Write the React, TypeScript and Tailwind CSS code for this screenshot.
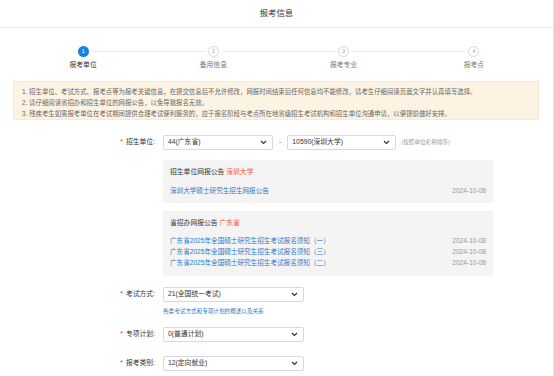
import React from 'react';

const steps = ['报考单位', '备用信息', '报考专业', '报考点'];

const notices = [
  '1. 招生单位、考试方式、报考点等为报考关键信息，在提交信息后不允许修改，网报时间结束后任何信息均不能修改，请考生仔细阅读页面文字并认真填写选择。',
  '2. 请仔细阅读省招办和招生单位的网报公告，以免导致报名无效。',
  '3. 残疾考生如需报考单位在考试期间提供合理考试便利服务的，应于报名阶段与考点所在地省级招生考试机构和招生单位沟通申请，以便提前做好安排。',
];

const provinceLinks = [
  '广东省2025年全国硕士研究生招生考试报名须知（一）',
  '广东省2025年全国硕士研究生招生考试报名须知（三）',
  '广东省2025年全国硕士研究生招生考试报名须知（二）',
];

function Chevron() {
  return (
    <svg width="7" height="5" viewBox="0 0 7 5" className="shrink-0">
      <path d="M1 1 L3.5 3.5 L6 1" fill="none" stroke="#333" strokeWidth="1.2" />
    </svg>
  );
}

function Select({ value, width }: { value: string; width: string }) {
  return (
    <div className={`${width} h-[15px] border border-[#d9d9d9] rounded-[2px] bg-white flex items-center justify-between pl-[4px] pr-[5px] text-[6.8px] text-[#333]`}>
      <span>{value}</span>
      <Chevron />
    </div>
  );
}

function Label({ text }: { text: string }) {
  return (
    <div className="w-[155px] flex justify-end items-center text-[6.8px] text-[#333]">
      <span className="text-[#f5222d] mr-[3px]">*</span>
      <span>{text}:</span>
    </div>
  );
}

export default function App() {
  return (
    <div
      className="w-[554px] h-[376px] overflow-hidden bg-white border-r border-[#e3e3e3]"
      style={{ fontFamily: '"Liberation Sans", "Noto Sans CJK SC", sans-serif' }}
    >
      <div className="h-[28px] border-b border-[#e6e6e6] flex items-center justify-center text-[8.4px] text-[#333]">
        报考信息
      </div>

      <div className="mt-[18px] ml-[18px] w-[521px] grid grid-cols-4">
        {steps.map((s, i) => (
          <div key={s} className="flex flex-col items-center">
            <div className="w-full flex items-center">
              <div className={`flex-1 h-px mr-[3px] ${i === 0 ? '' : 'bg-[#ececec]'}`} />
              {i === 0 ? (
                <div className="w-[11px] h-[11px] rounded-full bg-[#1684e0] text-white text-[6px] flex items-center justify-center">
                  1
                </div>
              ) : (
                <div className="w-[11px] h-[11px] rounded-full border border-[#d6d6d6] bg-white text-[#aaa] text-[6px] flex items-center justify-center">
                  {i + 1}
                </div>
              )}
              <div className={`flex-1 h-px ml-[3px] ${i === 3 ? '' : 'bg-[#ececec]'}`} />
            </div>
            <div className={`mt-[3px] text-[6.8px] leading-[9px] ${i === 0 ? 'text-[#333]' : 'text-[#777]'}`}>{s}</div>
          </div>
        ))}
      </div>

      <div className="mt-[12px] ml-[13px] w-[526px] h-[39px] border border-[#fbe9cf] bg-[#fdf3e3] rounded-[2px] pl-[8px] pt-[4px] text-[6.4px] leading-[11px] text-[#666]">
        {notices.map((n) => (
          <div key={n} className="whitespace-nowrap">{n}</div>
        ))}
      </div>

      <div className="mt-[15px] flex items-center">
        <Label text="招生单位" />
        <div className="ml-[8px] flex items-center">
          <Select value="44(广东省)" width="w-[110px]" />
          <span className="mx-[6px] text-[7px] text-[#666]">-</span>
          <Select value="10590(深圳大学)" width="w-[109px]" />
          <span className="ml-[5px] text-[5.6px] text-[#999]">(按照单位名称排序)</span>
        </div>
      </div>

      <div className="mt-[10px] ml-[163px] w-[330px] bg-[#f4f4f4] px-[7px] pt-[8px] pb-[7px]">
        <div className="text-[6.8px] leading-[8px] text-[#333]">
          招生单位网报公告 <span className="text-[#f5533d]">深圳大学</span>
        </div>
        <div className="mt-[8.5px] flex justify-between text-[6.6px] leading-[11px]">
          <span className="text-[#2b7bc8]">深圳大学硕士研究生招生网报公告</span>
          <span className="text-[#999]">2024-10-08</span>
        </div>
      </div>

      <div className="mt-[8px] ml-[163px] w-[330px] bg-[#f4f4f4] px-[7px] pt-[8px] pb-[8px]">
        <div className="text-[6.8px] leading-[8px] text-[#333]">
          省招办网报公告 <span className="text-[#f5533d]">广东省</span>
        </div>
        <div className="mt-[8.5px]">
          {provinceLinks.map((l) => (
            <div key={l} className="flex justify-between text-[6.6px] leading-[11px]">
              <span className="text-[#2b7bc8]">{l}</span>
              <span className="text-[#999]">2024-10-08</span>
            </div>
          ))}
        </div>
      </div>

      <div className="mt-[11px] flex items-center">
        <Label text="考试方式" />
        <div className="ml-[8px]">
          <Select value="21(全国统一考试)" width="w-[141px]" />
        </div>
      </div>
      <div className="mt-[5px] ml-[163px] text-[5.6px] leading-[8px] text-[#2b7bc8]">各类考试方式和专项计划的概述以及关系</div>

      <div className="mt-[12px] flex items-center">
        <Label text="专项计划" />
        <div className="ml-[8px]">
          <Select value="0(普通计划)" width="w-[141px]" />
        </div>
      </div>

      <div className="mt-[14px] flex items-center">
        <Label text="报考类别" />
        <div className="ml-[8px]">
          <Select value="12(定向就业)" width="w-[141px]" />
        </div>
      </div>
    </div>
  );
}
